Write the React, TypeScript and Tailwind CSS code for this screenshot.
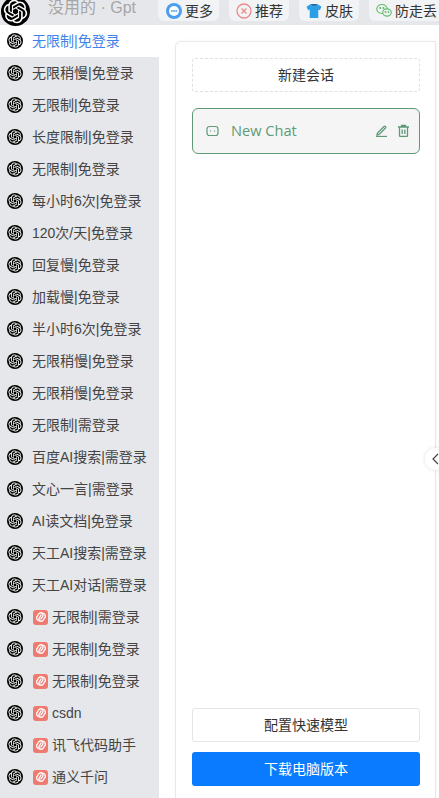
import React from "react";

const OPENAI =
  "M22.2819 9.8211a5.9847 5.9847 0 0 0-.5157-4.9108 6.0462 6.0462 0 0 0-6.5098-2.9A6.0651 6.0651 0 0 0 4.9807 4.1818a5.9847 5.9847 0 0 0-3.9977 2.9 6.0462 6.0462 0 0 0 .7427 7.0966 5.98 5.98 0 0 0 .511 4.9107 6.051 6.051 0 0 0 6.5146 2.9001A5.9847 5.9847 0 0 0 13.2599 24a6.0557 6.0557 0 0 0 5.7718-4.2058 5.9894 5.9894 0 0 0 3.9977-2.9001 6.0557 6.0557 0 0 0-.7475-7.0729zm-9.022 12.6081a4.4755 4.4755 0 0 1-2.8764-1.0408l.1419-.0804 4.7783-2.7582a.7948.7948 0 0 0 .3927-.6813v-6.7369l2.02 1.1686a.071.071 0 0 1 .038.052v5.5826a4.504 4.504 0 0 1-4.4945 4.4944zm-9.6607-4.1254a4.4708 4.4708 0 0 1-.5346-3.0137l.142.0852 4.783 2.7582a.7712.7712 0 0 0 .7806 0l5.8428-3.3685v2.3324a.0804.0804 0 0 1-.0332.0615L9.74 19.9502a4.4992 4.4992 0 0 1-6.1408-1.6464zM2.3408 7.8956a4.485 4.485 0 0 1 2.3655-1.9728V11.6a.7664.7664 0 0 0 .3879.6765l5.8144 3.3543-2.0201 1.1685a.0757.0757 0 0 1-.071 0l-4.8303-2.7865A4.504 4.504 0 0 1 2.3408 7.872zm16.5963 3.8558L13.1038 8.364 15.1192 7.2a.0757.0757 0 0 1 .071 0l4.8303 2.7913a4.4944 4.4944 0 0 1-.6765 8.1042v-5.6772a.79.79 0 0 0-.407-.667zm2.0107-3.0231l-.142-.0852-4.7735-2.7818a.7759.7759 0 0 0-.7854 0L9.409 9.2297V6.8974a.0662.0662 0 0 1 .0284-.0615l4.8303-2.7866a4.4992 4.4992 0 0 1 6.6802 4.66zM8.3065 12.863l-2.02-1.1638a.0804.0804 0 0 1-.038-.0567V6.0742a4.4992 4.4992 0 0 1 7.3757-3.4537l-.142.0805L8.704 5.459a.7948.7948 0 0 0-.3927.6813zm1.0976-2.3654l2.602-1.4998 2.6069 1.4998v2.9994l-2.5974 1.4997-2.6067-1.4997Z";

function Logo({ size }: { size: number }) {
  return (
    <svg width={size} height={size} viewBox="0 0 32 32" className="shrink-0">
      <circle cx="16" cy="16" r="16" fill="#000" />
      <g transform="translate(3 3) scale(1.083)">
        <path d={OPENAI} fill="#fff" />
      </g>
    </svg>
  );
}

function LinkBadge() {
  return (
    <span className="ml-[1px] mr-[4px] flex h-[15px] w-[15px] shrink-0 items-center justify-center rounded-[3px] bg-[#ee7a70]">
      <svg width="14" height="14" viewBox="0 0 12 12" fill="none" stroke="#fff" strokeWidth="1.100" strokeLinecap="round">
        <path d="M7 2.600a2.700 2.700 0 0 1 2.600 3.600L7.600 9a2 2 0 0 1-3.200-2.300l1.700-2.400" />
        <path d="M5 9.400a2.700 2.700 0 0 1-2.600-3.600L4.400 3a2 2 0 0 1 3.200 2.300L5.900 7.700" />
      </svg>
    </span>
  );
}

const rows: { t: string; badge?: boolean }[] = [
  { t: "无限制|免登录" },
  { t: "无限稍慢|免登录" },
  { t: "无限制|免登录" },
  { t: "长度限制|免登录" },
  { t: "无限制|免登录" },
  { t: "每小时6次|免登录" },
  { t: "120次/天|免登录" },
  { t: "回复慢|免登录" },
  { t: "加载慢|免登录" },
  { t: "半小时6次|免登录" },
  { t: "无限稍慢|免登录" },
  { t: "无限稍慢|免登录" },
  { t: "无限制|需登录" },
  { t: "百度AI搜索|需登录" },
  { t: "文心一言|需登录" },
  { t: "AI读文档|免登录" },
  { t: "天工AI搜索|需登录" },
  { t: "天工AI对话|需登录" },
  { t: "无限制|需登录", badge: true },
  { t: "无限制|免登录", badge: true },
  { t: "无限制|免登录", badge: true },
  { t: "csdn", badge: true },
  { t: "讯飞代码助手", badge: true },
  { t: "通义千问", badge: true },
];

function Pill({ icon, label, w }: { icon: React.ReactNode; label: string; w: string }) {
  return (
    <div className={`flex h-[21px] shrink-0 items-center gap-[3px] rounded-b-[6px] bg-[#f2f3f5] text-[14px] leading-none text-[#333] ${w}`}>
      <span className="flex h-[16px] w-[16px] items-center justify-center">{icon}</span>
      <span className="whitespace-nowrap">{label}</span>
    </div>
  );
}

const MoreIcon = (
  <svg width="16" height="16" viewBox="0 0 16 16">
    <circle cx="8" cy="8" r="8" fill="#4a9ff0" />
    <circle cx="8" cy="8" r="5" fill="#fff" />
    <circle cx="5.800" cy="8" r="0.9" fill="#4a9ff0" />
    <circle cx="8" cy="8" r="0.9" fill="#4a9ff0" />
    <circle cx="10.200" cy="8" r="0.9" fill="#4a9ff0" />
  </svg>
);
const RecIcon = (
  <svg width="16" height="16" viewBox="0 0 16 16" fill="none" stroke="#ec8a8a" strokeWidth="1.300">
    <circle cx="8" cy="8" r="7" />
    <path d="M5.500 5.500l5 5M10.500 5.500l-5 5" />
  </svg>
);
const ShirtIcon = (
  <svg width="16" height="16" viewBox="0 0 15 15">
    <path d="M4.500 1L0.500 3.500l1.500 3.300 1.500-.7V14h8V6.100l1.500.7 1.500-3.300L10.500 1c-.5 1.500-1.500 2.200-3 2.200S5 2.500 4.500 1z" fill="#2a9fe6" />
    <path d="M4.500 1c.5 1.500 1.500 2.200 3 2.200s2.500-.7 3-2.200z" fill="#1c6fa8" />
  </svg>
);
const WechatIcon = (
  <svg width="16" height="15" viewBox="0 0 16 15" fill="none" stroke="#5fbf6a" strokeWidth="1.100">
    <ellipse cx="6" cy="6" rx="5.300" ry="4.500" />
    <ellipse cx="11" cy="9.500" rx="4.300" ry="3.600" fill="#f2f3f5" />
    <circle cx="4.300" cy="5" r="0.5" fill="#5fbf6a" />
    <circle cx="7.500" cy="5" r="0.5" fill="#5fbf6a" />
    <circle cx="9.500" cy="9" r="0.4" fill="#5fbf6a" />
    <circle cx="12.500" cy="9" r="0.4" fill="#5fbf6a" />
  </svg>
);

export default function App() {
  return (
    <div
      className="flex h-[798px] w-[439px] flex-col overflow-hidden bg-white text-[14px] text-[#444]"
      style={{ fontFamily: '"Liberation Sans", "Noto Sans CJK SC", sans-serif' }}
    >
      <header className="relative z-10 flex h-[25px] shrink-0 items-start bg-[#e6e7eb]">
        <div className="ml-[1px] mt-[-3px] flex w-[47px] shrink-0">
          <Logo size={29} />
        </div>
        <span className="w-[110px] shrink-0 whitespace-nowrap text-[16px] leading-[16px] text-[#a6a6a6]">没用的 · Gpt</span>
        <div className="flex gap-[10px] overflow-hidden">
          <Pill icon={MoreIcon} label="更多" w="w-[61px] pl-[8px]" />
          <Pill icon={RecIcon} label="推荐" w="w-[60px] pl-[7px]" />
          <Pill icon={ShirtIcon} label="皮肤" w="w-[60px] pl-[7px]" />
          <Pill icon={WechatIcon} label="防走丢" w="w-[74px] pl-[7px]" />
        </div>
      </header>
      <div className="flex min-h-0 flex-1">
        <nav className="w-[159px] shrink-0 overflow-hidden bg-[#e6e7eb]">
          {rows.map((r, i) => (
            <div
              key={i}
              className={`flex h-[32px] items-center whitespace-nowrap pl-[7px] ${i === 0 ? "bg-white text-[#3f83e8]" : ""}`}
            >
              <span className="mr-[9px] shrink-0">
                <Logo size={16} />
              </span>
              {r.badge && <LinkBadge />}
              <span>{r.t}</span>
            </div>
          ))}
        </nav>
        <main className="relative flex-1 pt-[16px]">
          <section className="ml-[16px] mr-[3px] flex h-[757px] flex-col rounded-tl-[6px] border-l border-r border-t border-[#e8e8e8] pb-[12px] pl-[16px] pr-[15px] pt-[16px] shadow-[0_0_4px_rgba(0,0,0,0.03)]">
            <button className="h-[34px] w-full shrink-0 rounded-[3px] border border-dashed border-[#e0e0e0] text-[14px] text-[#333]">
              新建会话
            </button>
            <div className="mt-[16px] flex h-[46px] shrink-0 items-center rounded-[6px] border border-[#5f9a76] bg-[#f5f5f5] pb-[1px] pl-[13px] pr-[9px] text-[#5f9a76]">
              <svg width="13" height="12" viewBox="0 0 13 12" fill="none" stroke="currentColor" strokeWidth="1.200" className="shrink-0">
                <rect x="1" y="1.500" width="11" height="9" rx="2.500" />
                <path d="M4.500 5.500v1M8.500 5.500v1" />
              </svg>
              <span className="ml-[12px] flex-1 text-[14.6px]" style={{ fontFamily: '"Open Sans", sans-serif' }}>New Chat</span>
              <svg width="13" height="13" viewBox="0 0 13 13" fill="none" stroke="currentColor" strokeWidth="1.300" className="mr-[9px]">
                <path d="M2.500 9l-.5 2 2-.5 6.500-6.500a1 1 0 0 0-1.500-1.500z" />
                <path d="M1 12.500h11" />
              </svg>
              <svg width="13" height="13" viewBox="0 0 13 13" fill="none" stroke="currentColor" strokeWidth="1.300">
                <path d="M1 3h11M4.500 3V1.500h4V3M2.500 3v8.500a1 1 0 0 0 1 1h6a1 1 0 0 0 1-1V3M5.200 5.500v4.500M7.800 5.500v4.500" />
              </svg>
            </div>
            <div className="flex-1" />
            <button className="h-[34px] w-full shrink-0 rounded-[3px] border border-[#e5e5e5] text-[14px] text-[#333]">
              配置快速模型
            </button>
            <button className="mt-[10px] h-[34px] w-full shrink-0 rounded-[3px] bg-[#0a7bff] text-[14px] text-white">
              下载电脑版本
            </button>
          </section>
          <div className="absolute right-[-8px] top-[423px] flex h-[22px] w-[22px] items-center justify-center rounded-full bg-white shadow-[0_0_4px_rgba(0,0,0,0.12)]">
            <svg width="10" height="12" viewBox="0 0 10 12" fill="none" stroke="#444" strokeWidth="1.200">
              <path d="M7 1L2 6l5 5" />
            </svg>
          </div>
        </main>
      </div>
    </div>
  );
}
